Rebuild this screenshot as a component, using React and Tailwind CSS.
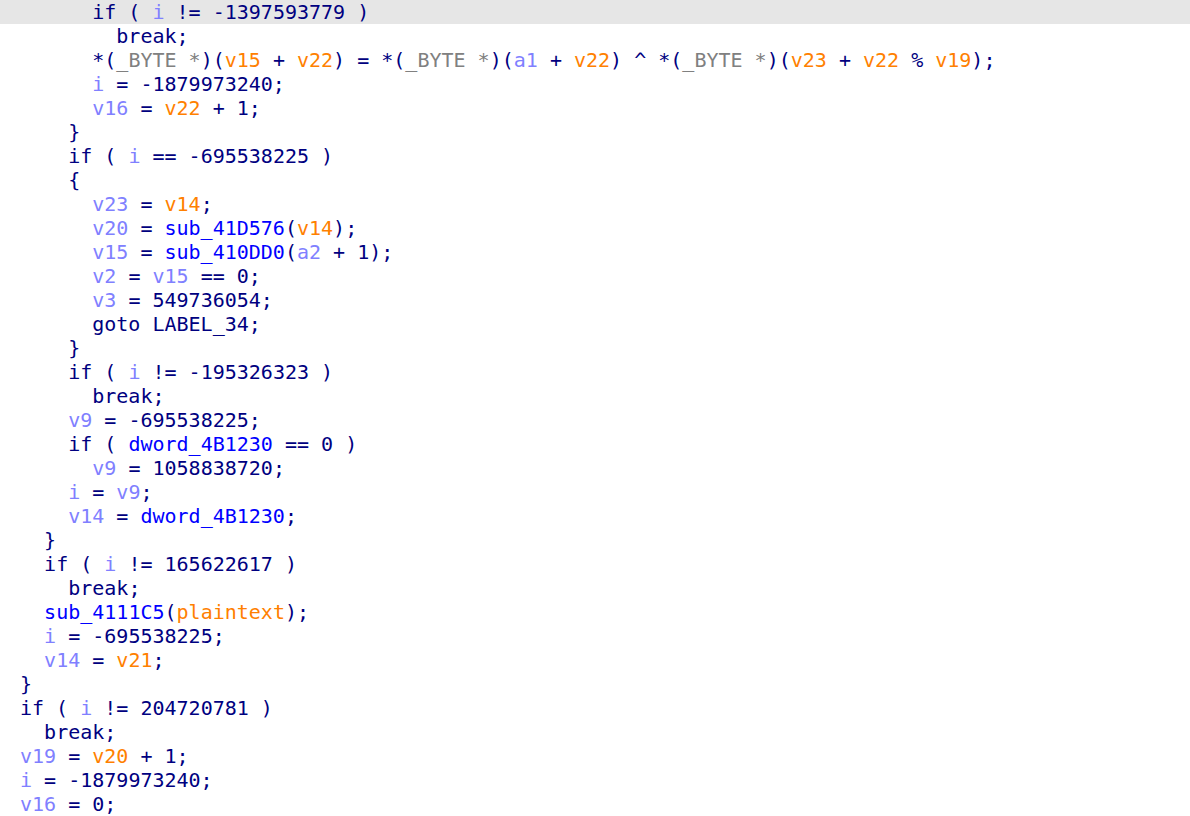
const lines = [
  [3, "if ( {l:i} != -1397593779 )", true],
  [4, "break;"],
  [3, "*({t:_BYTE *})({o:v15} + {o:v22}) = *({t:_BYTE *})({l:a1} + {o:v22}) ^ *({t:_BYTE *})({o:v23} + {o:v22} % {o:v19});"],
  [3, "{l:i} = -1879973240;"],
  [3, "{l:v16} = {o:v22} + 1;"],
  [2, "}"],
  [2, "if ( {l:i} == -695538225 )"],
  [2, "{"],
  [3, "{l:v23} = {o:v14};"],
  [3, "{l:v20} = {g:sub_41D576}({o:v14});"],
  [3, "{l:v15} = {g:sub_410DD0}({l:a2} + 1);"],
  [3, "{l:v2} = {l:v15} == 0;"],
  [3, "{l:v3} = 549736054;"],
  [3, "goto LABEL_34;"],
  [2, "}"],
  [2, "if ( {l:i} != -195326323 )"],
  [3, "break;"],
  [2, "{l:v9} = -695538225;"],
  [2, "if ( {g:dword_4B1230} == 0 )"],
  [3, "{l:v9} = 1058838720;"],
  [2, "{l:i} = {l:v9};"],
  [2, "{l:v14} = {g:dword_4B1230};"],
  [1, "}"],
  [1, "if ( {l:i} != 165622617 )"],
  [2, "break;"],
  [1, "{g:sub_4111C5}({o:plaintext});"],
  [1, "{l:i} = -695538225;"],
  [1, "{l:v14} = {o:v21};"],
  [0, "}"],
  [0, "if ( {l:i} != 204720781 )"],
  [1, "break;"],
  [0, "{l:v19} = {o:v20} + 1;"],
  [0, "{l:i} = -1879973240;"],
  [0, "{l:v16} = 0;"],
];

// l = local var, o = highlighted var, g = global/function, t = type
const tokenColor = {
  l: "text-[#8080ff]",
  o: "text-[#ff8000]",
  g: "text-[#0000ff]",
  t: "text-[#808080]",
};

function renderCode(src) {
  const parts = [];
  const re = /\{([logt]):([^}]*)\}/g;
  let last = 0;
  let m;
  let k = 0;
  while ((m = re.exec(src))) {
    if (m.index > last) parts.push(<span key={k++}>{src.slice(last, m.index)}</span>);
    parts.push(
      <span key={k++} className={tokenColor[m[1]]}>
        {m[2]}
      </span>
    );
    last = re.lastIndex;
  }
  if (last < src.length) parts.push(<span key={k++}>{src.slice(last)}</span>);
  return parts;
}

export default function App() {
  return (
    <div className="w-[1190px] h-[816px] overflow-hidden bg-white text-[#000080] font-['DejaVu_Sans_Mono',monospace] text-[20px] leading-[24px]">
      {lines.map(([lvl, src, hl], i) => (
        <div
          key={i}
          className={`h-[24px] pl-[20px] whitespace-pre ${hl ? "bg-[#e6e6e6]" : ""}`}
        >
          {"  ".repeat(lvl)}
          {renderCode(src)}
        </div>
      ))}
    </div>
  );
}
